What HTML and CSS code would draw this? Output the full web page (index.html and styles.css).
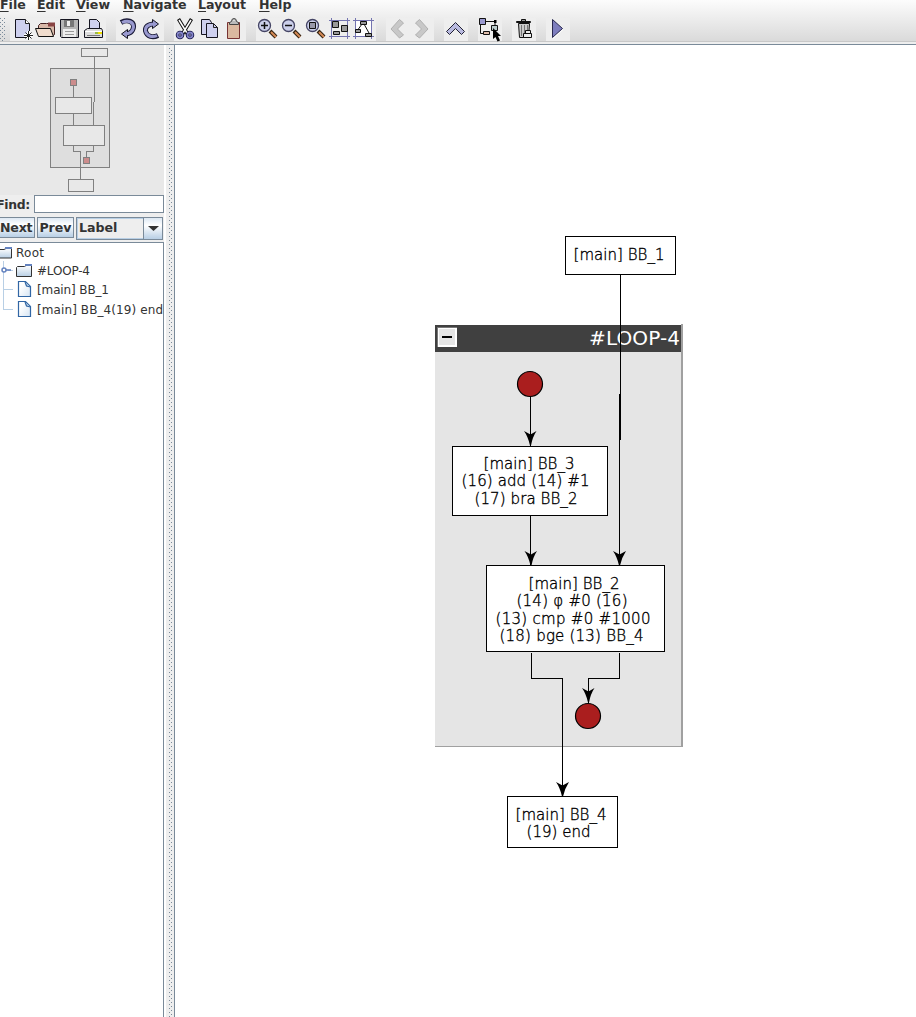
FILE: index.html
```html
<!DOCTYPE html>
<html lang="en">
<head>
<meta charset="utf-8">
<title>Graph viewer</title>
<link rel="stylesheet" href="styles.css">
</head>
<body>
<div class="app">
<header class="top">
<nav class="menu">
<span class="m-file"><u>F</u>ile</span><span class="m-edit"><u>E</u>dit</span><span class="m-view"><u>V</u>iew</span><span class="m-nav"><u>N</u>avigate</span><span class="m-layout"><u>L</u>ayout</span><span class="m-help"><u>H</u>elp</span>
</nav>
<div class="toolbar">
<span class="grip"></span>
<div class="group">
<svg viewBox="10 18 24 24"><path class="lav ink" d="M15.500 19.500h10l4 4v14h-14z"/><path d="M25.500 19.500v4h4" fill="#fff" stroke="#222"/><path d="M24 35.500h9M28.500 31v9" stroke="#fff" stroke-width="3"/><path d="M24 35.500h9M28.500 31v9M25.500 32.500l6 6M31.500 32.500l-6 6" stroke="#222"/></svg>
<svg viewBox="34 18 24 24"><path d="M38.500 29v-3.500l2-2h6l2-0h6v11l-3 2" fill="#d8b8a8" stroke="#422"/><path d="M48 22.500h7v4h-7z" fill="#844"/><path d="M35.500 28.500h15l3 8h-15z" fill="#f0dccd" stroke="#111"/></svg>
<svg viewBox="58 18 24 24"><path class="ink" fill="#b5b5b5" d="M60.500 19.500h18v18h-17l-1-1z"/><path fill="#777" d="M64 20h10v7h-10z"/><path fill="#eee" d="M67 21h3v5h-3zM63 29h13v8h-13z"/><path stroke="#999" d="M65 31.500h9M65 34.500h9"/></svg>
<svg viewBox="82 18 24 24"><path class="lav ink" d="M89.500 30.500v-11h7l3 3v8z"/><path class="ink" fill="#ddd" d="M84.500 30.500l3-2h14l1 2v7h-18z"/><path stroke="#fff" d="M85 31.500h17"/><path stroke="#9b4" stroke-width="2" d="M95 33h3"/><path stroke="#ed0" stroke-width="2" d="M98 33h4"/><path stroke="#777" d="M87 35.500h13"/></svg>
</div>
<div class="group">
<svg viewBox="116 18 24 24"><path class="arc-o" d="M121 22.500C128 18.500 134 22 133.500 27C133 32 129 34 125 34"/><path class="blue ink" d="M127.500 29.500v9l-6-4.500z"/><path class="arc-i" d="M122 22.500C128 19.500 133.500 22 133.500 27C133 32 129 34 125 34"/></svg>
<svg viewBox="140 18 24 24"><path class="arc-o" d="M154 24C148 24 145 27 145.500 31C147 37 153 38 158 35.500"/><path class="blue ink" d="M152.500 19.500v9l6-4.500z"/><path class="arc-i" d="M154 24C148 24 145 27 145.500 31C147 37 153 37.500 157 35.500"/></svg>
</div>
<div class="group">
<svg viewBox="174 18 24 24"><path d="M178.500 19l9 15M191.500 19l-9 15" stroke="#111" stroke-width="3.500"/><path d="M179 20l8 13M191 20l-8 13" stroke="#fff" stroke-width="1.500"/><g fill="#eee" stroke="#114" stroke-width="3.500"><ellipse cx="180" cy="35" rx="2.500" ry="2.500"/><ellipse cx="190" cy="35" rx="2.500" ry="2.500"/></g><g fill="none" stroke="#8585c8" stroke-width="1.800"><circle cx="180" cy="35" r="2.500"/><circle cx="190" cy="35" r="2.500"/></g></svg>
<svg viewBox="198 18 24 24"><path class="lav ink" d="M201.500 19.500h8l2 3v12h-10z"/><path class="lav ink" d="M206.500 23.500h7l4 4v10h-11z"/><path fill="none" stroke="#222" d="M213.500 23.500v4h4"/></svg>
<svg viewBox="222 18 24 24"><path d="M227.500 22.500h12v16h-12z" fill="#dbb9a0" stroke="#733"/><path d="M229.500 24.500v-2l2-1q0-3 2.500-3t2.500 3l2 1v2z" fill="#bbb" stroke="#444"/><path stroke="#fff" d="M234 20v1"/></svg>
</div>
<div class="group">
<svg viewBox="256 18 24 24"><path class="handle-o" d="M270 31l6 6"/><path class="handle-i" d="M271 32l5 5"/><circle class="lens" cx="264.500" cy="25.500" r="6"/><path class="sign" d="M261 25.500h7M264.500 22v7"/></svg>
<svg viewBox="280 18 24 24"><path class="handle-o" d="M294 31l6 6"/><path class="handle-i" d="M295 32l5 5"/><circle class="lens" cx="288.500" cy="25.500" r="6"/><path class="sign" d="M285 25.500h7"/></svg>
<svg viewBox="304 18 24 24"><path class="handle-o" d="M318 31l6 6"/><path class="handle-i" d="M319 32l5 5"/><circle class="lens" cx="312.500" cy="25.500" r="6"/><path d="M309.500 22.500h6v6h-6z" fill="#99a" stroke="#111"/></svg>
<svg viewBox="328 18 24 24"><path class="frame" d="M329 20.500h21M329 36.500h21M331.500 18v21M347.500 18v21"/><path class="chip" d="M332.500 21.500h6v6h-6zM341.500 25.500h6v6h-6zM333.500 31.500h6v3h-6z"/></svg>
<svg viewBox="352 18 24 24"><path fill="#fff" d="M355 20h16v17h-16z"/><path class="frame" d="M353 20.500h21M353 36.500h21M355.500 18v21M371.500 18v21"/><path stroke="#111" d="M362 24l-5 7M364 24l5 9"/><path class="chip" d="M360.500 21.500h6v3h-6zM355.500 29.500h5v3h-5zM365.500 33.500h6v3h-6z"/></svg>
</div>
<div class="group">
<svg viewBox="386 18 24 24"><path d="M399.500 19.500l4 3.500l-6 6l6 6l-4 3l-8.500-9z" fill="#c8c8c8" stroke="#b0b0b0"/></svg>
<svg viewBox="410 18 24 24"><path d="M419.500 19.500l-4 3.500l6 6l-6 6l4 3l8.500-9z" fill="#c8c8c8" stroke="#b0b0b0"/></svg>
</div>
<div class="group"><svg viewBox="444 18 24 24"><path d="M455.500 22.500l9 9l-3 3l-6-6l-6 6l-3-3z" fill="#b9bae0" stroke="#223"/></svg></div>
<div class="group"><svg viewBox="478 18 24 24"><path d="M480.500 24v9.500h4M486 21.500h9v4" fill="none" stroke="#111"/><path d="M479.500 18.500h6v6h-6z" fill="#9999cf" stroke="#111"/><path d="M491.500 25.500h6v5h-6z" fill="#bcc" stroke="#111"/><path d="M483.500 31.500h6v3h-6z" fill="#dba" stroke="#111"/><path d="M494 20h2.500v3h-2.500zM493 28v11l2.500-2l2 4.500l2.500-1l-2-4.500h3z" fill="#000"/></svg></div>
<div class="group"><svg viewBox="512 18 24 24"><path d="M518.500 23.500h11l-1 14h-9z" fill="#ccc" stroke="#111"/><path d="M521.500 25v11M524.500 25v11M527.500 25v6" stroke="#777"/><path d="M516.500 21.500h14v1h-14zM521.500 19.500h4v2h-4z" fill="#999" stroke="#111"/><path d="M525.500 30.500h5v3h-5zM523.500 33.500h8v4h-8z" fill="#eee" stroke="#111"/></svg></div>
<div class="group"><svg viewBox="546 18 24 24"><path d="M552.500 19.500v18l10-9z" fill="#7d7dbd" stroke="#28284e"/><path d="M553 38.500l10-9" stroke="#fff"/></svg></div>
</div>
</header>
<main class="body">
<aside class="side">
<svg class="overview" viewBox="0 45 164 150" shape-rendering="crispEdges">
<path fill="#dedede" stroke="#808080" d="M50.500 68.500h59v99h-59z"/>
<g fill="none" stroke="#808080"><path d="M94.500 57v45M93.500 102v24M73.500 86v12M73.500 113v13M73.500 145v6.500h7v28M93.500 145v6.500h-7v6"/></g>
<path fill="#e8e8e8" stroke="#808080" d="M81.500 48.500h26v8h-26zM55.500 97.500h36v16h-36zM63.500 125.500h41v20h-41zM68.500 179.500h25v12h-25z"/>
<path fill="#cc8c8c" stroke="#808080" d="M70.500 79.500h6v6h-6zM83.500 157.500h6v6h-6z"/>
</svg>
<div class="find"><label for="q">Find:</label><input id="q" type="text"></div>
<div class="controls"><button class="b-next">Next</button><button class="b-prev">Prev</button><div class="combo"><span>Label</span><i><svg viewBox="0 0 18 20"><path d="M4 8h11l-5.500 5z" fill="#333"/></svg></i></div></div>
<div class="tree">
<svg viewBox="0 243 163 80">
<defs><linearGradient id="fold" x1="0" y1="0" x2="0" y2="1"><stop offset="0" stop-color="#fff"/><stop offset="1" stop-color="#b8cfe5"/></linearGradient><linearGradient id="leaf" x1="0" y1="0" x2="1" y2="1"><stop offset="0.3" stop-color="#fff"/><stop offset="1" stop-color="#d4e4f3"/></linearGradient></defs>
<path d="M3.500 261v48.500M3 289.500h10M3 309.500h10M8 270.500h5" stroke="#b8cfe5"/>
<circle cx="4" cy="270" r="2" fill="#fff" stroke="#6382bf" stroke-width="1.500"/><path d="M6 270h5" stroke="#6382bf" stroke-width="1.600"/>
<path d="M-5 249.500h9l2-1h5.500v9.500h-17" fill="url(#fold)" stroke="#333"/><path d="M5 248h7" stroke="#6382bf" stroke-width="2"/>
<path d="M16.500 267.500l1-1h7l1.500-1h5.500v11h-15z" fill="url(#fold)" stroke="#333"/><path d="M25 265h7" stroke="#6382bf" stroke-width="2"/>
<g fill="url(#leaf)" stroke="#3166a4" stroke-width="1.200"><path d="M18.500 281.500h7l5 5v10h-12z"/><path d="M18.500 301.500h7l5 5v10h-12z"/><path d="M25 282l1.500 4l4 1M25 302l1.500 4l4 1" fill="#b8cfe5"/></g>
<g class="tree-text"><text x="16" y="257" textLength="28">Root</text><text x="37" y="275" textLength="53">#LOOP-4</text><text x="37" y="294" textLength="72">[main] BB_1</text><text x="37" y="314" textLength="126">[main] BB_4(19) end</text></g>
</svg>
</div>
</aside>
<div class="split"><i></i></div>
<section class="canvas">
<svg viewBox="175 45 741 972">
<g shape-rendering="crispEdges">
<path fill="#e5e5e5" d="M435 352h246v394h-246z"/><path fill="#404040" d="M435 325h246v27h-246z"/>
<path fill="#a0a0a0" d="M681 324h2v423h-2zM435 746h248v1h-248z"/>
<path fill="#777" d="M437 327h20v20h-20z"/><path fill="#fff" d="M438 328h19v19h-19z"/><path fill="#e5e5e5" d="M439 329h16v16h-16z"/><path fill="#000" d="M442 336h10v2h-10z"/>
</g>
<text class="title" x="589" y="345" textLength="91">#LOOP-4</text>
<g shape-rendering="crispEdges" fill="none" stroke="#000">
<path d="M620.500 274v166M619.500 394v171M530.500 396v50M530.500 515v50M531.500 653v25.500h31v118M619.500 653v25.500h-31v24"/>
<path fill="#fff" d="M565.500 236.500h110v38h-110zM452.500 446.500h155v69h-155zM486.500 565.500h178v86h-178zM507.500 796.500h110v51h-110z"/>
</g>
<path d="M524 431l6.500 3.500l6-3.500q-4 6-5.500 14.500h-1q-2-9-6-14.500zM524.500 551l6.500 3.500l6-3.500q-4 6-5.500 14.500h-1q-2-9-6-14.500zM613 551l6.500 3.500l6.500-3.500q-4 6-6 14.500h-1q-2-9-6-14.500zM582 688l6.500 3.500l6-3.500q-4 6-5.500 14.500h-1q-2-9-6-14.500zM556 782l6.500 3.500l6.500-3.500q-4 6-6 14.500h-1q-2-9-6-14.500z"/>
<g fill="#aa1e1e" stroke="#000" stroke-width="1.200"><circle cx="530" cy="384" r="12.500"/><circle cx="588" cy="716" r="12.500"/></g>
<g class="node-text">
<text x="573.500" y="260" textLength="91">[main] BB_1</text>
<text x="483.500" y="469" textLength="91">[main] BB_3</text><text x="461.500" y="486" textLength="128">(16) add (14) #1</text><text x="474.500" y="504" textLength="103">(17) bra BB_2</text>
<text x="528.500" y="589" textLength="91">[main] BB_2</text><text x="516.500" y="606" textLength="111">(14) φ #0 (16)</text><text x="495.500" y="624" textLength="155">(13) cmp #0 #1000</text><text x="499.500" y="641" textLength="144">(18) bge (13) BB_4</text>
<text x="515.500" y="820" textLength="91">[main] BB_4</text><text x="526.500" y="837" textLength="64">(19) end</text>
</g>
</svg>
</section>
</main>
</div>
</body>
</html>
```
FILE: styles.css
```css
* { box-sizing: border-box; }
body { margin: 0; background: #eee; font-family: "DejaVu Sans", sans-serif; color: #333; }
svg { display: block; }
.app { width: 916px; height: 1017px; display: flex; flex-direction: column; overflow: hidden; }
.top { height: 45px; flex: none; background: linear-gradient(#fcfcfc, #dadada 41px, #c8c8c8 41px, #c8c8c8 42px, #eee 42px); border-bottom: 1px solid #7a8a99; overflow: hidden; }
.menu { display: grid; grid-template-columns: 37px 39px 47px 75px 61px 100px; height: 18px; margin-top: -4px; font-size: 12.6px; font-weight: bold; line-height: 18px; white-space: nowrap; }
.menu u { text-underline-offset: 2px; text-decoration-thickness: 1px; }
.toolbar { display: flex; gap: 10px; height: 27px; padding-top: 4px; }
.grip { width: 6px; margin-right: -6px; height: 23px; background: conic-gradient(from 270deg at 1px 1px, #7a8a99 90deg, transparent 0) 0 0 / 4px 4px, conic-gradient(from 270deg at 1px 1px, #7a8a99 90deg, transparent 0) 2px 2px / 4px 4px; }
.group { display: flex; background: #eee; height: 23px; }
.group svg { width: 24px; height: 24px; fill: none; }
.ink { stroke: #151520; }
.lav { fill: #ced0ef; }
.blue { fill: #9999cf; }
.arc-o { stroke: #1b1b38; stroke-width: 5; }
.arc-i { stroke: #9999cf; stroke-width: 3; }
.lens { fill: #ccd0eb; stroke: #454565; stroke-width: 1.3; }
.handle-o { stroke: #321; stroke-width: 4; }
.handle-i { stroke: #d58a55; stroke-width: 2; }
.sign { stroke: #111; stroke-width: 1.5; }
.frame { stroke: #7474b0; }
.chip { fill: #999; stroke: #111; }
.body { flex: 1; display: flex; min-height: 0; }
.side { width: 164px; display: flex; flex-direction: column; }
.overview { width: 164px; height: 150px; background: #e8e8e8; flex: none; }
.find { display: flex; height: 19px; font-size: 12.4px; font-weight: bold; }
.find label { width: 34px; height: 18px; line-height: 19px; display: flex; justify-content: flex-end; padding-right: 4px; letter-spacing: -0.3px; white-space: nowrap; }
.find input { width: 130px; height: 18px; border: 1px solid #7a8a99; background: #fff; padding: 0; }
.controls { display: flex; height: 28px; padding: 3px 0 2px; gap: 2px; }
.controls button { font: bold 12.6px "DejaVu Sans", sans-serif; color: #333; padding: 0; height: 21px; border: 1px solid #7a8a99; background: linear-gradient(#dde8f3, #fff 35%, #b8cfe5); white-space: nowrap; }
.controls .b-next { width: 35px; border-left: 0; padding-right: 3px; letter-spacing: -0.2px; }
.b-prev { width: 37px; }
.combo { width: 87px; height: 23px; border: 1px solid #7a8a99; display: flex; justify-content: space-between; font-size: 12.6px; font-weight: bold; line-height: 19px; box-shadow: inset 1px 1px #b8cfe5, inset 0 -1px #b8cfe5; }
.combo span { padding-left: 2px; }
.combo i { width: 19px; border-left: 1px solid #7a8a99; background: linear-gradient(#dde8f3, #fff 35%, #b8cfe5); }
.tree { flex: 1; background: #fff; border-top: 1px solid #7a8a99; border-right: 1px solid #7a8a99; }
.tree svg { width: 163px; height: 80px; }
.tree-text { font-size: 12px; fill: #333; }
.split { width: 11px; border-left: 2px solid #fff; border-right: 1px solid #7a8a99; background: #eee; padding: 3px 0 0 3px; }
.split i { display: block; width: 4px; height: 100%; background: conic-gradient(from 270deg at 1px 1px, #7a8a99 90deg, transparent 0) 0 0 / 4px 4px, conic-gradient(from 270deg at 1px 1px, #7a8a99 90deg, transparent 0) 2px 2px / 4px 4px; }
.canvas { flex: 1; background: #fff; }
.canvas svg { width: 741px; height: 972px; }
.node-text { font-size: 15px; fill: #000; font-weight: 200; stroke: #000; stroke-width: 0.35px; }
.title { font-size: 20px; fill: #fff; }
```
